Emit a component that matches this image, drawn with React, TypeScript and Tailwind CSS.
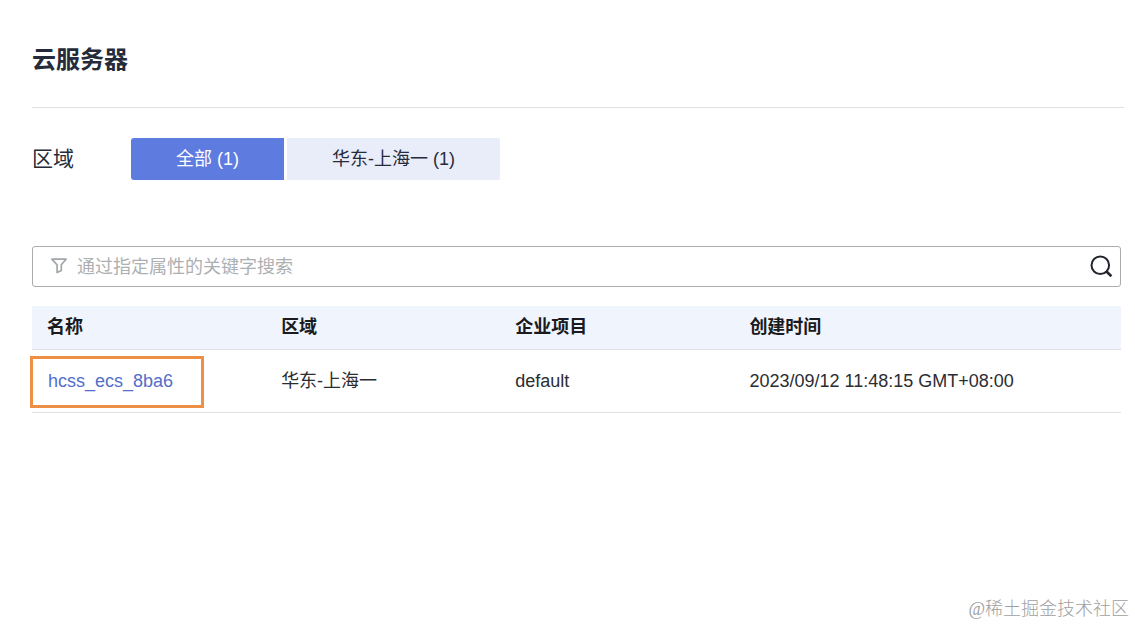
import React, { useState } from 'react';

const App: React.FC = () => {
  const [region, setRegion] = useState('all');
  const [keyword, setKeyword] = useState('');

  const regions = [
    { key: 'all', label: '全部 (1)', width: 'w-[153px]' },
    { key: 'shanghai-1', label: '华东-上海一 (1)', width: 'w-[213px]' }
  ];

  const columns = [
    { key: 'name', label: '名称', width: 'w-[21.5%]' },
    { key: 'region', label: '区域', width: 'w-[21.5%]' },
    { key: 'project', label: '企业项目', width: 'w-[21.5%]' },
    { key: 'createdAt', label: '创建时间', width: 'w-auto' }
  ];

  const servers = [
    {
      id: 1,
      name: 'hcss_ecs_8ba6',
      region: '华东-上海一',
      project: 'default',
      createdAt: '2023/09/12 11:48:15 GMT+08:00',
      highlighted: true
    }
  ];

  return (
    <div className="relative flex min-h-screen flex-col bg-white pl-8 pr-[14px] font-['Liberation_Sans','Noto_Sans_CJK_SC',sans-serif] text-lg text-[#252b3a]">
      {/* Page title */}
      <header className="-mr-[3px] border-b border-[#dfe1e6] pt-[42px] pb-[29px]">
        <h1 className="text-2xl leading-9 font-bold">云服务器</h1>
      </header>

      {/* Region tabs */}
      <div className="mt-[30px] flex items-center">
        <span className="w-[99px] text-[21px] leading-7">区域</span>
        <div className="flex gap-[3px]">
          {regions.map((item) => (
            <button
              key={item.key}
              type="button"
              onClick={() => setRegion(item.key)}
              className={`h-[42px] cursor-pointer first:rounded-l-[3px] last:rounded-r-[2px] ${item.width} ${
                region === item.key ? 'bg-[#5e7ce0] text-white' : 'bg-[#e9edfa] text-[#252b3a]'
              }`}
            >
              {item.label}
            </button>
          ))}
        </div>
      </div>

      {/* Search */}
      <div className="mt-[66px] flex h-[41px] items-center rounded-[3px] border border-[#a9adad] pr-[7px] pl-[18px]">
        <svg width="17" height="17" viewBox="0 0 17 17" fill="none" stroke="#a3a6a8" strokeWidth="1.7" strokeLinejoin="round" className="shrink-0">
          <path d="M0.9 1.2H15.1L10.3 6.8V12.4L6.1 14.6V6.8Z" />
        </svg>
        <input
          type="text"
          aria-label="搜索"
          placeholder="通过指定属性的关键字搜索"
          value={keyword}
          onChange={(e) => setKeyword(e.target.value)}
          className="ml-[9px] min-w-0 flex-1 bg-transparent outline-none placeholder:text-[#adb0b2]"
        />
        <button type="button" aria-label="搜索" className="shrink-0 cursor-pointer">
          <svg width="24" height="24" viewBox="0 0 24 24" fill="none" stroke="#22252b" strokeWidth="2">
            <circle cx="11.3" cy="10.3" r="8.8" />
            <path d="M17.2 16.2L22.4 21.2" strokeWidth="2.6" />
          </svg>
        </button>
      </div>

      {/* Server list */}
      <table className="mt-[19px] w-full table-fixed border-collapse text-left">
        <thead>
          <tr className="h-[43px] border-b border-[#dfe1e6] bg-[#f0f4fd]">
            {columns.map((col) => (
              <th key={col.key} scope="col" className={`pl-[15px] font-bold text-[#191b20] ${col.width}`}>
                {col.label}
              </th>
            ))}
          </tr>
        </thead>
        <tbody>
          {servers.map((server) => (
            <tr key={server.id} className="h-[63px] border-b border-[#dfe1e6] text-[#2b2d32]">
              <td className="relative pl-4">
                <a href="#" className="text-[#526ecc]">{server.name}</a>
                {server.highlighted && (
                  <span className="pointer-events-none absolute top-1.5 -left-0.5 h-[52px] w-[174px] border-[3px] border-[#ee8f46]" />
                )}
              </td>
              <td className="pl-[15px]">{server.region}</td>
              <td className="pl-[15px]">{server.project}</td>
              <td className="pl-[15px]">{server.createdAt}</td>
            </tr>
          ))}
        </tbody>
      </table>

      <footer className="mt-auto -mr-2 pb-0.5 text-right font-['Liberation_Serif','Noto_Sans_CJK_SC',serif] font-light text-[#a0a0a0]">
        @稀土掘金技术社区
      </footer>
    </div>
  );
};

export default App;
